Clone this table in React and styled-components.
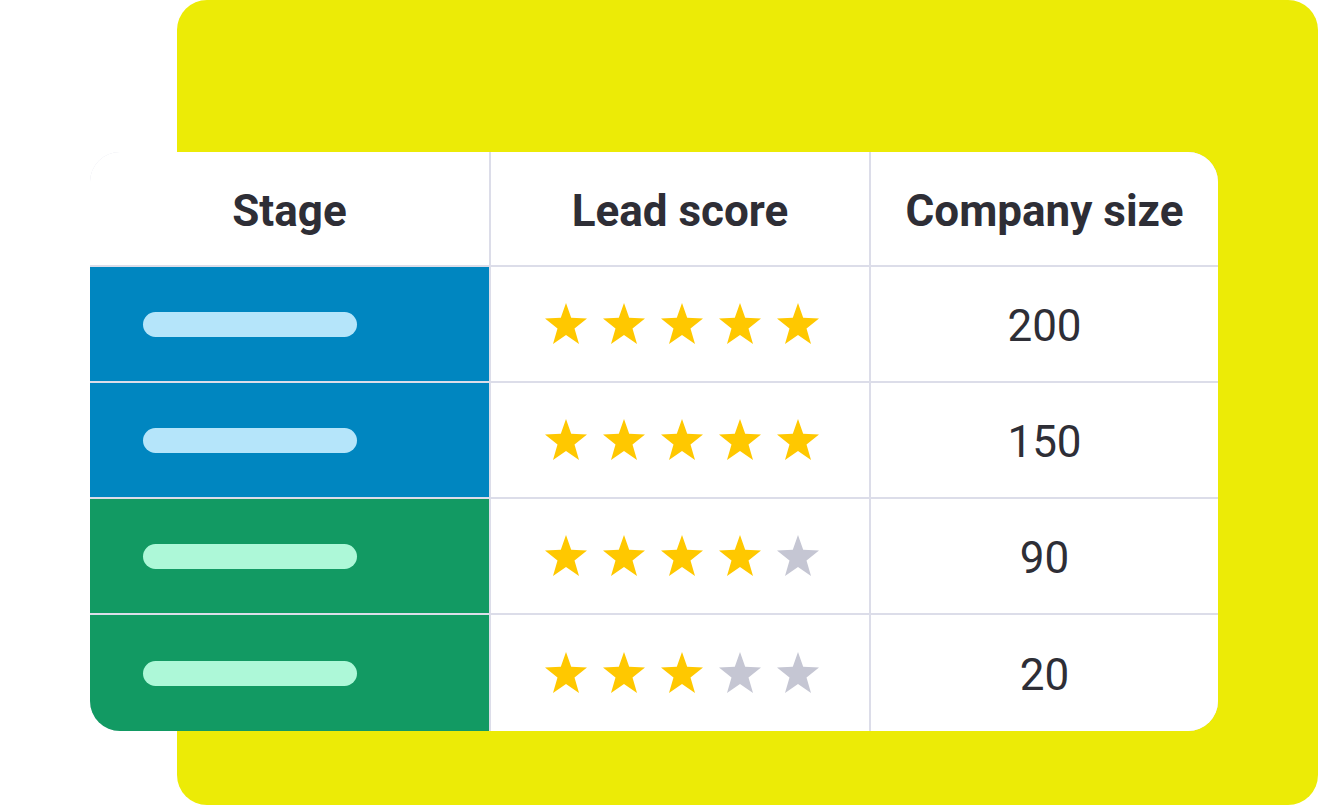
import React from 'react'
import styled, { createGlobalStyle } from 'styled-components'

const GlobalStyle = createGlobalStyle`
    html, body {
        margin: 0;
        padding: 0;
        background: #ffffff;
    }
    body {
        font-family: Roboto, "Liberation Sans", sans-serif;
    }
`

const Scene = styled.div`
    width: 1318px;
    height: 809px;
    display: grid;
    grid-template-columns: 1fr;
    grid-template-rows: 1fr;
    overflow: hidden;
`

const Backdrop = styled.div`
    grid-area: 1 / 1;
    margin-left: 177px;
    height: 805px;
    background: #eceb06;
    border-radius: 30px;
`

const Table = styled.div`
    grid-area: 1 / 1;
    align-self: start;
    justify-self: start;
    margin: 152px 0 0 90px;
    width: 1128px;
    display: grid;
    grid-template-columns: 399px 378px 347px;
    grid-template-rows: 113px 114px 114px 114px 116px;
    gap: 2px;
    background: #dcdde9;
    border-radius: 30px;
    overflow: hidden;
`

const HeadCell = styled.div`
    background: #ffffff;
    display: flex;
    align-items: center;
    justify-content: center;
    font-size: 44px;
    font-weight: 700;
    color: #2e2e36;
    padding-top: 4px;
`

const StageCell = styled.div`
    background: ${p => (p.$tone === 'green' ? '#129a63' : '#0086c0')};
    display: flex;
    align-items: center;
    padding-left: 53px;
`

const Pill = styled.div`
    width: 214px;
    height: 25px;
    border-radius: 13px;
    background: ${p => (p.$tone === 'green' ? '#adf8d8' : '#b5e5fa')};
`

const ScoreCell = styled.div`
    background: #ffffff;
    display: flex;
    align-items: center;
    justify-content: center;
    gap: 16px;
    padding-left: 3px;
    padding-bottom: 2px;
`

const SizeCell = styled.div`
    background: #ffffff;
    display: flex;
    align-items: center;
    justify-content: center;
    font-size: 44px;
    font-weight: 400;
    color: #2e2e36;
    padding-top: 4px;
`

const Star = ({ on }) => (
    <svg width="42" height="41" viewBox="0 0 42 41">
        <polygon
            points="21,0 26.2,14.8 42,15.5 29.5,25.4 34,41 21,32 8,41 12.5,25.4 0,15.5 15.8,14.8"
            fill={on ? '#ffc800' : '#c5c6d3'}
        />
    </svg>
)

const rows = [
    { tone: 'blue', score: 5, size: 200 },
    { tone: 'blue', score: 5, size: 150 },
    { tone: 'green', score: 4, size: 90 },
    { tone: 'green', score: 3, size: 20 },
]

export default function App() {
    return (
        <>
            <GlobalStyle />
            <Scene>
                <Backdrop />
                <Table>
                    <HeadCell>Stage</HeadCell>
                    <HeadCell>Lead score</HeadCell>
                    <HeadCell>Company size</HeadCell>
                    {rows.map((row, i) => (
                        <React.Fragment key={i}>
                            <StageCell $tone={row.tone}>
                                <Pill $tone={row.tone} />
                            </StageCell>
                            <ScoreCell>
                                {[0, 1, 2, 3, 4].map(n => (
                                    <Star key={n} on={n < row.score} />
                                ))}
                            </ScoreCell>
                            <SizeCell>{row.size}</SizeCell>
                        </React.Fragment>
                    ))}
                </Table>
            </Scene>
        </>
    )
}
